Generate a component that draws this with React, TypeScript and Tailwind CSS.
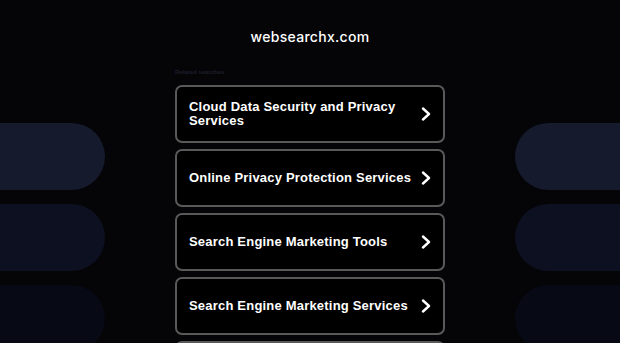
const searches = [
  "Cloud Data Security and Privacy Services",
  "Online Privacy Protection Services",
  "Search Engine Marketing Tools",
  "Search Engine Marketing Services",
  "Website Security Services",
];

const pillColors = ["bg-[#151a2d]", "bg-[#0d1020]", "bg-[#070914]"];

function Chevron() {
  return (
    <svg width="12" height="14" viewBox="0 0 12 14" className="shrink-0">
      <polyline
        points="3,1.5 9,7 3,12.5"
        fill="none"
        stroke="white"
        strokeWidth="2.4"
        strokeLinecap="round"
        strokeLinejoin="round"
      />
    </svg>
  );
}

function Pills({ side }: { side: "left" | "right" }) {
  return (
    <div className="flex flex-col gap-[14px] pt-[123px]">
      {pillColors.map((c) => (
        <div
          key={c}
          className={`h-[67px] ${c} ${
            side === "left" ? "rounded-r-full" : "rounded-l-full"
          }`}
        />
      ))}
    </div>
  );
}

export default function App() {
  return (
    <div
      className="h-[343px] w-[620px] overflow-hidden bg-[#050508]"
      style={{ fontFamily: "'Liberation Sans', Arial, sans-serif" }}
    >
      <div className="grid grid-cols-[105px_270px_105px] gap-x-[70px]">
        <Pills side="left" />

        <div className="flex flex-col">
          <h1
            className="pt-[26px] text-center text-[14px] font-medium tracking-[0.3px] text-white"
            style={{ fontFamily: "Inter, 'Liberation Sans', sans-serif" }}
          >
            websearchx.com
          </h1>
          <p className="mt-[20px] text-[6px] font-bold leading-[10px] text-[#1d1f2b]">
            Related searches
          </p>
          <div className="mt-[8px] flex flex-col gap-[6px]">
            {searches.map((s) => (
              <a
                key={s}
                href="#"
                className="flex h-[58px] items-center justify-between gap-[5px] rounded-[7px] border-2 border-[#595959] bg-black pl-[12px] pr-[11px]"
              >
                <span className="text-[13px] font-bold leading-[14px] tracking-[0.2px] text-white">
                  {s}
                </span>
                <Chevron />
              </a>
            ))}
          </div>
        </div>

        <Pills side="right" />
      </div>
    </div>
  );
}
